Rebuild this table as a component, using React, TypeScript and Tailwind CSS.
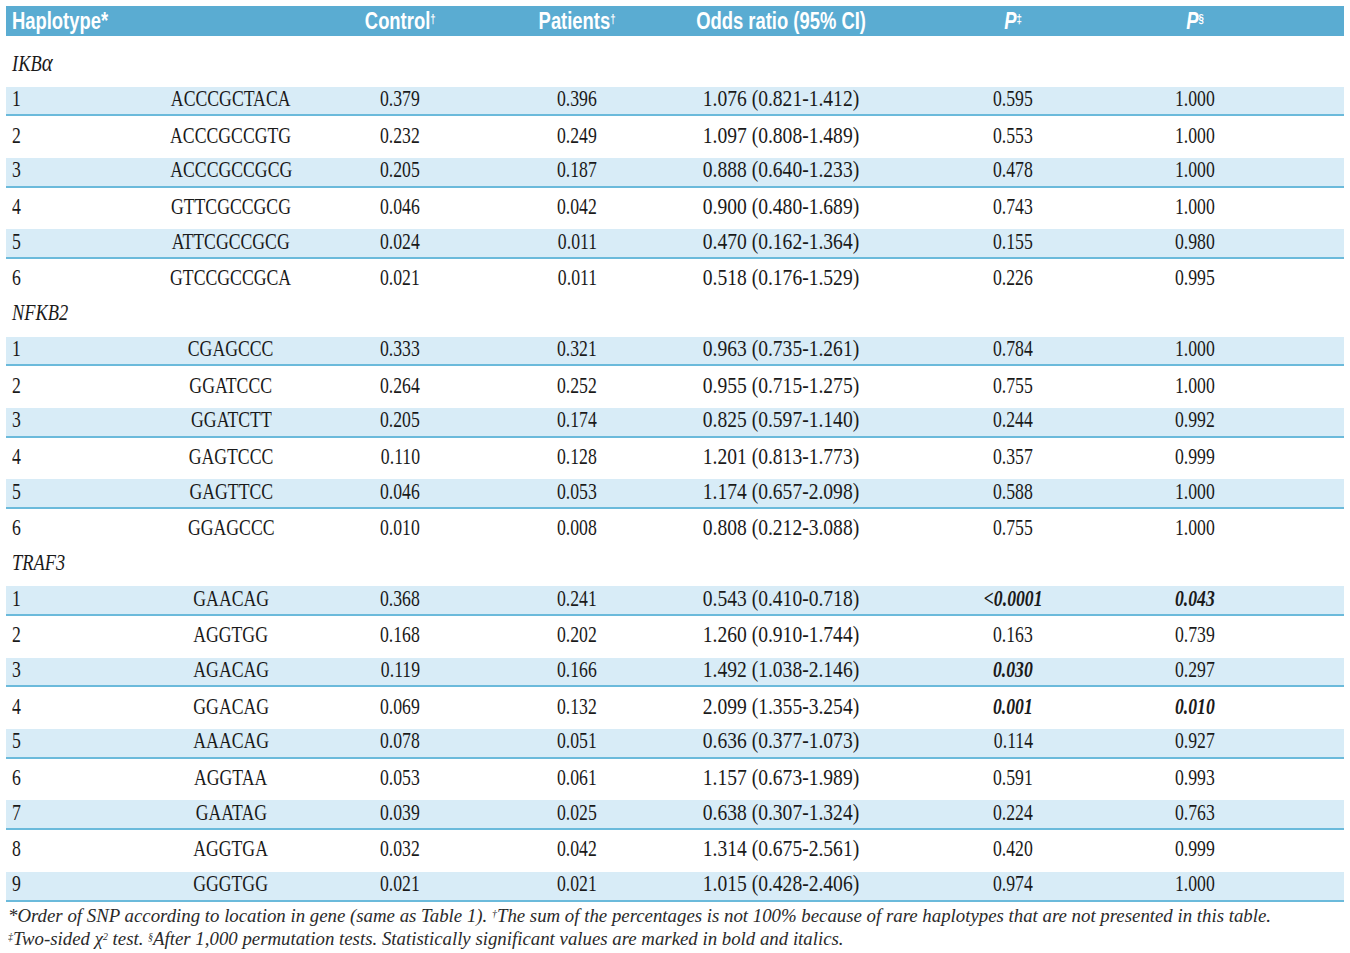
type Row = [string, string, string, string, string, string, string]

const sections: { name: React.ReactNode; rows: Row[] }[] = [
  {
    name: (
      <>
        IKB<span className="text-[26px]">α</span>
      </>
    ),
    rows: [
      ["1", "ACCCGCTACA", "0.379", "0.396", "1.076 (0.821-1.412)", "0.595", "1.000"],
      ["2", "ACCCGCCGTG", "0.232", "0.249", "1.097 (0.808-1.489)", "0.553", "1.000"],
      ["3", "ACCCGCCGCG", "0.205", "0.187", "0.888 (0.640-1.233)", "0.478", "1.000"],
      ["4", "GTTCGCCGCG", "0.046", "0.042", "0.900 (0.480-1.689)", "0.743", "1.000"],
      ["5", "ATTCGCCGCG", "0.024", "0.011", "0.470 (0.162-1.364)", "0.155", "0.980"],
      ["6", "GTCCGCCGCA", "0.021", "0.011", "0.518 (0.176-1.529)", "0.226", "0.995"],
    ],
  },
  {
    name: "NFKB2",
    rows: [
      ["1", "CGAGCCC", "0.333", "0.321", "0.963 (0.735-1.261)", "0.784", "1.000"],
      ["2", "GGATCCC", "0.264", "0.252", "0.955 (0.715-1.275)", "0.755", "1.000"],
      ["3", "GGATCTT", "0.205", "0.174", "0.825 (0.597-1.140)", "0.244", "0.992"],
      ["4", "GAGTCCC", "0.110", "0.128", "1.201 (0.813-1.773)", "0.357", "0.999"],
      ["5", "GAGTTCC", "0.046", "0.053", "1.174 (0.657-2.098)", "0.588", "1.000"],
      ["6", "GGAGCCC", "0.010", "0.008", "0.808 (0.212-3.088)", "0.755", "1.000"],
    ],
  },
  {
    name: "TRAF3",
    rows: [
      ["1", "GAACAG", "0.368", "0.241", "0.543 (0.410-0.718)", "!<0.0001", "!0.043"],
      ["2", "AGGTGG", "0.168", "0.202", "1.260 (0.910-1.744)", "0.163", "0.739"],
      ["3", "AGACAG", "0.119", "0.166", "1.492 (1.038-2.146)", "!0.030", "0.297"],
      ["4", "GGACAG", "0.069", "0.132", "2.099 (1.355-3.254)", "!0.001", "!0.010"],
      ["5", "AAACAG", "0.078", "0.051", "0.636 (0.377-1.073)", "0.114", "0.927"],
      ["6", "AGGTAA", "0.053", "0.061", "1.157 (0.673-1.989)", "0.591", "0.993"],
      ["7", "GAATAG", "0.039", "0.025", "0.638 (0.307-1.324)", "0.224", "0.763"],
      ["8", "AGGTGA", "0.032", "0.042", "1.314 (0.675-2.561)", "0.420", "0.999"],
      ["9", "GGGTGG", "0.021", "0.021", "1.015 (0.428-2.406)", "0.974", "1.000"],
    ],
  },
]

const cols = "grid grid-cols-[134px_182px_156px_198px_210px_254px_110px_94px]"

// odds-ratio column reads a bit wider in the source than the plain numbers
function Val({ v, left, wide }: { v: string; left?: boolean; wide?: boolean }) {
  const strong = v.startsWith("!")
  const text = strong ? v.slice(1) : v
  return (
    <div className={"whitespace-nowrap " + (left ? "pl-[6px] text-left" : "text-center")}>
      <span
        className={
          "inline-block " +
          (wide ? "scale-x-[0.85] " : "scale-x-[0.77] ") +
          (left ? "origin-left " : "origin-center ") +
          (strong ? "font-bold italic" : "")
        }
      >
        {text}
      </span>
    </div>
  )
}

function HeadCell({ children }: { children: React.ReactNode }) {
  return (
    <div className="flex justify-center whitespace-nowrap">
      <span className="inline-block origin-center scale-x-[0.8]">{children}</span>
    </div>
  )
}

export default function App() {
  return (
    <div className="min-h-screen bg-white px-[6px] pt-[6px] text-[#1a1a1a]">
      <div className="w-[1338px]">
        <div
          className={
            cols +
            " mb-[9px] h-[30px] items-center bg-[#5aacd2] font-['Liberation_Sans',sans-serif] text-[23px] leading-none font-bold text-white"
          }
        >
          <div className="col-span-2 pl-[6px] whitespace-nowrap">
            <span className="inline-block origin-left scale-x-[0.8]">Haplotype*</span>
          </div>
          <HeadCell>
            Control<sup className="text-[12px]">†</sup>
          </HeadCell>
          <HeadCell>
            Patients<sup className="text-[12px]">†</sup>
          </HeadCell>
          <HeadCell>Odds ratio (95% CI)</HeadCell>
          <HeadCell>
            <span className="italic">P</span>
            <sup className="text-[12px]">‡</sup>
          </HeadCell>
          <HeadCell>
            <span className="italic">P</span>
            <sup className="text-[12px]">§</sup>
          </HeadCell>
          <div />
        </div>

        <div className="font-['Liberation_Serif',serif] text-[23px] leading-none">
          {sections.map((s, si) => (
            <div key={si}>
              <div className="flex h-[35.7px] items-center pl-[6px]">
                <span className="inline-block origin-left scale-x-[0.8] italic">{s.name}</span>
              </div>
              {s.rows.map((r, i) => (
                <div
                  key={i}
                  className={
                    cols +
                    " h-[35.7px] items-center pt-[2px] " +
                    (i % 2 === 0
                      ? "border-b-2 border-[#6bbadb] bg-[linear-gradient(to_bottom,transparent_6px,#d8ecf7_6px)]"
                      : "")
                  }
                >
                  <Val v={r[0]} left />
                  <Val v={r[1]} />
                  <Val v={r[2]} />
                  <Val v={r[3]} />
                  <Val v={r[4]} wide />
                  <Val v={r[5]} />
                  <Val v={r[6]} />
                  <div />
                </div>
              ))}
            </div>
          ))}
        </div>

        <div className="pt-[2px] pl-[2px] font-['Liberation_Serif',serif] text-[19px] leading-[23px] text-[#2a2a2a] italic">
          <div className="origin-left scale-x-[0.99] whitespace-nowrap">
            *Order of SNP according to location in gene (same as Table 1).{" "}
            <sup className="text-[10px]">†</sup>The sum of the percentages is not 100% because of rare
            haplotypes that are not presented in this table.
          </div>
          <div className="origin-left scale-x-[0.99] whitespace-nowrap">
            <sup className="text-[10px]">‡</sup>Two-sided χ<sup className="text-[10px]">2</sup> test.{" "}
            <sup className="text-[10px]">§</sup>After 1,000 permutation tests. Statistically significant
            values are marked in bold and italics.
          </div>
        </div>
      </div>
    </div>
  )
}
